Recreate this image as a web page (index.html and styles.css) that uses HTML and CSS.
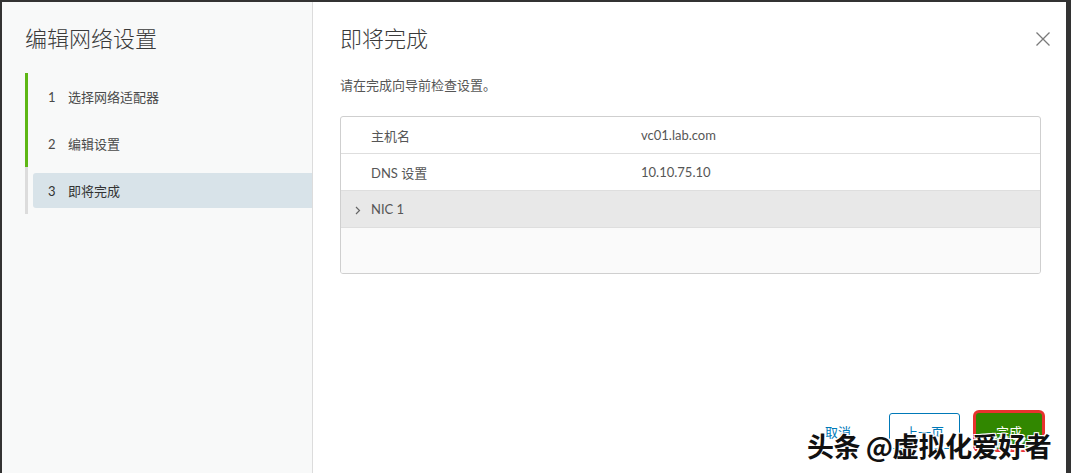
FILE: index.html
```html
<!DOCTYPE html>
<html lang="zh-CN">
<head>
<meta charset="utf-8">
<title>编辑网络设置</title>
<link rel="stylesheet" href="styles.css">
</head>
<body>
<div class="modal">
  <aside class="nav">
    <h1 class="nav-title">编辑网络设置</h1>
    <ol class="steps">
      <li class="step done"><div class="step-item"><span class="num">1</span><span>选择网络适配器</span></div></li>
      <li class="step done"><div class="step-item"><span class="num">2</span><span>编辑设置</span></div></li>
      <li class="step current"><div class="step-item active"><span class="num">3</span><span>即将完成</span></div></li>
    </ol>
  </aside>
  <main class="content">
    <header class="content-head">
      <h2 class="content-title">即将完成</h2>
      <button class="close" aria-label="关闭">
        <svg width="16" height="16" viewBox="0 0 16 16"><path d="M1.5 1.5 L14.5 14.5 M14.5 1.5 L1.5 14.5" stroke="#7a7a7a" stroke-width="1.3" fill="none"/></svg>
      </button>
    </header>
    <p class="desc">请在完成向导前检查设置。</p>
    <div class="table">
      <div class="row"><span class="cell label">主机名</span><span class="cell value">vc01.lab.com</span></div>
      <div class="row"><span class="cell label">DNS 设置</span><span class="cell value">10.10.75.10</span></div>
      <div class="row group">
        <span class="cell label"><svg class="chev" width="6" height="9" viewBox="0 0 6 9"><path d="M1 1 L4.5 4.5 L1 8" stroke="#666" stroke-width="1.2" fill="none"/></svg>NIC 1</span>
        <span class="cell value"></span>
      </div>
      <div class="table-empty"></div>
    </div>
    <footer class="actions">
      <button class="btn btn-link">取消</button>
      <button class="btn btn-outline">上一页</button>
      <button class="btn btn-success">完成</button>
    </footer>
  </main>
  <div class="watermark">头条 @虚拟化爱好者</div>
</div>
</body>
</html>
```

FILE: styles.css
```css
* { box-sizing: border-box; }
html, body { margin: 0; padding: 0; }
body {
  background: #333;
  width: 1071px;
  height: 473px;
  overflow: hidden;
  font-family: Lato, "Noto Sans CJK SC", sans-serif;
  color: #565656;
}
.modal {
  position: relative;
  margin: 2px 5px 0 2px;
  height: 471px;
  display: flex;
  background: #fff;
}
.nav {
  width: 311px;
  flex: none;
  background: #f8f9f9;
  border-right: 1px solid #dcdcdc;
  padding: 20px 0 0 23px;
}
.nav-title {
  margin: 0 0 21px;
  font-size: 22px;
  font-weight: 300;
  line-height: 30px;
  color: #3a3a3a;
  font-family: "Noto Sans CJK SC", sans-serif;
}
.steps { list-style: none; margin: 0; padding: 0; }
.step {
  height: 47px;
  border-left: 3px solid #dcdcdc;
  padding: 6px 0 6px 5px;
}
.step.done { border-left-color: #5eb715; }
.step-item {
  height: 35px;
  display: flex;
  align-items: center;
  padding-left: 15px;
  font-size: 13px;
  color: #4a4a4a;
  border-radius: 3px 0 0 3px;
}
.step-item .num { width: 20px; }
.step-item.active { background: #d8e3e9; color: #333; }
.content {
  flex: 1;
  display: flex;
  flex-direction: column;
  padding: 20px 25px 24px 27px;
}
.content-head {
  display: flex;
  justify-content: space-between;
  align-items: center;
}
.content-title {
  margin: 0;
  font-size: 22px;
  font-weight: 300;
  line-height: 30px;
  color: #3a3a3a;
  font-family: "Noto Sans CJK SC", sans-serif;
}
.close {
  border: 0;
  background: none;
  padding: 0;
  width: 16px;
  height: 16px;
  margin: 3px -10px 0 0;
  display: flex;
}
.desc {
  margin: 23px 0 21px;
  font-size: 13px;
  line-height: 20px;
  color: #565656;
}
.table {
  border: 1px solid #cfcfcf;
  border-radius: 3px;
  overflow: hidden;
}
.row {
  display: grid;
  grid-template-columns: 270px 1fr;
  height: 37px;
  align-items: center;
  padding-left: 30px;
  border-bottom: 1px solid #dedede;
  font-size: 13px;
  color: #565656;
}
.row.group { background: #e8e8e8; padding-left: 14px; grid-template-columns: 286px 1fr; }
.chev { margin-right: 10px; vertical-align: -1px; }
.table-empty { height: 45px; background: #fafafa; }
.actions {
  margin-top: auto;
  display: flex;
  justify-content: flex-end;
  align-items: center;
  gap: 16px;
}
.btn {
  height: 36px;
  border-radius: 3px;
  font-size: 13px;
  font-family: "Noto Sans CJK SC", sans-serif;
  padding: 0 14px;
  background: none;
}
.btn-link { border: 0; color: #0079b8; padding: 0 6px; margin-right: 16px; }
.btn-outline { border: 1px solid #0079b8; color: #0079b8; width: 71px; }
.btn-success {
  border: 0;
  background: #318700;
  color: #fff;
  width: 66px;
  margin-right: -1px;
  box-shadow: 0 0 0 3px #e8322e;
}
.watermark {
  position: absolute;
  left: 805px;
  top: 424px;
  font-family: "Noto Sans CJK SC", sans-serif;
  font-size: 27px;
  font-weight: 700;
  color: #111;
  letter-spacing: -0.5px;
  text-shadow: 1px 1px 0 #fff, -1px -1px 0 #fff, 1px -1px 0 #fff, -1px 1px 0 #fff, 2px 2px 1px #fff;
  white-space: nowrap;
}
```
